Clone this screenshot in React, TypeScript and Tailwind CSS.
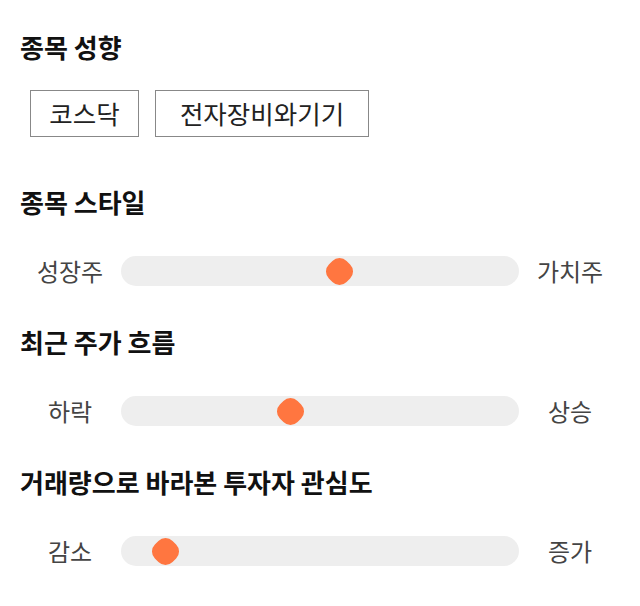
import React from "react";

const font = { fontFamily: '"Noto Sans CJK KR", "Noto Sans", sans-serif' };

function Heading({ children }: { children: React.ReactNode }) {
  return (
    <h2 className="text-[26px] leading-[36px] font-bold text-[#111111]">{children}</h2>
  );
}

function Slider({ left, right, pos }: { left: string; right: string; pos: number }) {
  return (
    <div className="flex items-center h-[30px]">
      <div className="w-[100px] text-center text-[24px] leading-[30px] text-[#444444]">{left}</div>
      <div className="relative flex-1 h-[30px] mx-px rounded-full bg-[#eeeeee]">
        <div
          className="absolute top-1/2 w-[25px] h-[25px] -ml-[12.5px] -mt-[12.5px] rotate-45 rounded-[10px] bg-[#ff7640]"
          style={{ left: `${pos}px` }}
        />
      </div>
      <div className="w-[100px] text-center text-[24px] leading-[30px] text-[#444444]">{right}</div>
    </div>
  );
}

export default function App() {
  return (
    <div className="w-[640px] h-[606px] bg-white px-5 pt-[29px]" style={font}>
      <Heading>종목 성향</Heading>
      <div className="flex gap-4 mt-[25px] pl-[10px]">
        <button className="h-[47px] w-[109px] border border-[#888888] text-[25.5px] text-[#222222] flex items-center justify-center">
          코스닥
        </button>
        <button className="h-[47px] w-[214px] border border-[#888888] text-[25.5px] text-[#222222] flex items-center justify-center">
          전자장비와기기
        </button>
      </div>
      <div className="mt-[47px]">
        <Heading>종목 스타일</Heading>
      </div>
      <div className="mt-[36px]">
        <Slider left="성장주" right="가치주" pos={218} />
      </div>
      <div className="mt-[38px]">
        <Heading>최근 주가 흐름</Heading>
      </div>
      <div className="mt-[36px]">
        <Slider left="하락" right="상승" pos={169} />
      </div>
      <div className="mt-[38px]">
        <Heading>거래량으로 바라본 투자자 관심도</Heading>
      </div>
      <div className="mt-[36px]">
        <Slider left="감소" right="증가" pos={44} />
      </div>
    </div>
  );
}
